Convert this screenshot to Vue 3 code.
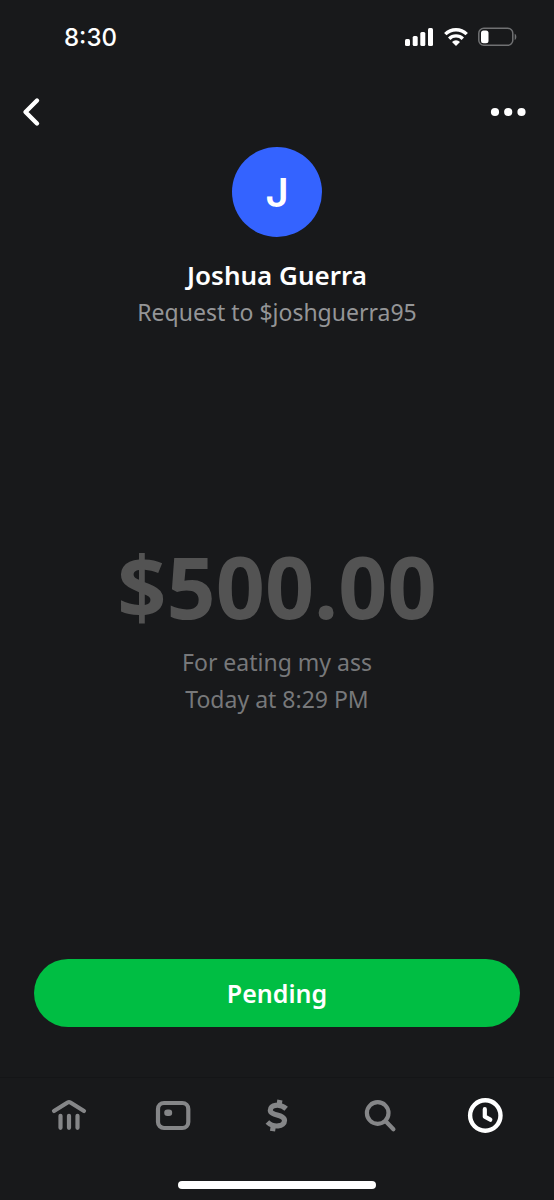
<template>
  <div class="screen">
    <!-- status bar -->
    <div class="status">
      <time class="clock">8:30</time>
      <div class="status-icons">
        <svg width="29" height="20" viewBox="0 0 29 20" fill="#fff">
          <rect x="0" y="12" width="5" height="7" rx="1.5" />
          <rect x="7.7" y="9" width="5" height="10" rx="1.5" />
          <rect x="15.3" y="5" width="5" height="14" rx="1.5" />
          <rect x="23" y="1" width="5" height="18" rx="1.5" />
        </svg>
        <svg width="24" height="20" viewBox="0 0 24 20" fill="none" stroke="#fff" stroke-width="3.4">
          <path d="M1.3 7.1a15.2 15.2 0 0 1 21.4 0" />
          <path d="M5.2 11.7a9.6 9.6 0 0 1 13.6 0" />
          <path d="M12 19 8 15a5.6 5.6 0 0 1 8 0z" fill="#fff" stroke="none" />
        </svg>
        <svg width="39" height="20" viewBox="0 0 39 20">
          <rect x="0.8" y="1.3" width="34" height="17" rx="5" fill="none" stroke="#707173" stroke-width="1.5" />
          <rect x="3" y="3.5" width="7.5" height="12.8" rx="2.5" fill="#fff" />
          <path d="M36.7 6.8c2.2 1 2.2 5.2 0 6.2z" fill="#707173" />
        </svg>
      </div>
    </div>

    <!-- header -->
    <header class="header">
      <button class="icon-btn" type="button" aria-label="Back">
        <svg width="20" height="30" viewBox="0 0 20 30" fill="none" stroke="#fff" stroke-width="4.4" stroke-linecap="round" stroke-linejoin="round">
          <path d="M15 3.5 3.5 15 15 26.5" />
        </svg>
      </button>
      <button class="icon-btn" type="button" aria-label="More">
        <svg width="36" height="10" viewBox="0 0 36 10" fill="#fff">
          <circle cx="5" cy="5" r="4.1" />
          <circle cx="18.2" cy="5" r="4.1" />
          <circle cx="31.5" cy="5" r="4.1" />
        </svg>
      </button>
    </header>

    <main class="main">
      <section class="profile">
        <div class="avatar">J</div>
        <h1 class="name">{{ payment.name }}</h1>
        <p class="cashtag">Request to {{ payment.cashtag }}</p>
      </section>

      <section class="payment">
        <div class="amount">{{ payment.amount }}</div>
        <p class="note">{{ payment.note }}</p>
        <p class="note">{{ payment.date }}</p>
      </section>

      <button class="pending" type="button">Pending</button>
    </main>

    <!-- tab bar -->
    <nav class="tabs">
      <button
        v-for="tab in tabs"
        :key="tab"
        class="tab"
        :class="{ active: tab === current }"
        type="button"
        :aria-label="tab"
        @click="current = tab"
      >
        <svg width="36" height="36" viewBox="0 0 36 36" fill="none" stroke="currentColor" stroke-width="4.2" stroke-linecap="round" stroke-linejoin="round">
          <g v-if="tab === 'Banking'">
            <path d="M3 14 16.6 5.5Q18 4.700 19.4 5.5L33 14" />
            <path d="M9.5 18.8v12M18 18.8v12M26.5 18.8v12" />
          </g>
          <g v-else-if="tab === 'Card'">
            <rect x="3" y="6" width="30.3" height="25" rx="6" />
            <rect x="9.2" y="12.5" width="8" height="6.5" rx="3.2" fill="currentColor" stroke="none" />
          </g>
          <g v-else-if="tab === 'Pay'" stroke-width="5.2" stroke-linecap="butt">
            <path d="M27.2 11.8C20.500 6 11 8 11.300 13.300 11.700 19 25.500 17 25.500 23.500 25.500 30 14.500 31 8.400 25" />
            <path d="m20.900 3-1 6M14.500 28l-1 6.200" />
          </g>
          <g v-else-if="tab === 'Search'">
            <circle cx="14.700" cy="16" r="10.800" />
            <path d="m23.200 24.800 7.200 7.400" />
          </g>
          <g v-else>
            <circle cx="18.3" cy="18.500" r="15.2" stroke-width="4.4" />
            <path d="M17.8 12.200v7.500l5.5 3" />
          </g>
        </svg>
      </button>
    </nav>
    <div class="home-indicator"></div>
  </div>
</template>

<script setup>
import { ref } from "vue";

const payment = {
  name: "Joshua Guerra",
  cashtag: "$joshguerra95",
  amount: "$500.00",
  note: "For eating my ass",
  date: "Today at 8:29 PM",
};

const tabs = ["Banking", "Card", "Pay", "Search", "Activity"];
const current = ref("Activity");
</script>

<style>
body {
  margin: 0;
  background: #18191b;
}
</style>

<style scoped>
* {
  box-sizing: border-box;
  margin: 0;
  padding: 0;
}

.screen {
  display: flex;
  flex-direction: column;
  min-height: 100vh;
  background: #18191b;
  color: #fff;
  font-family: "Noto Sans", sans-serif;
}

button {
  border: none;
  background: none;
  color: inherit;
  font-family: inherit;
  cursor: pointer;
}

svg {
  display: block;
}

/* status bar */
.status {
  display: flex;
  align-items: center;
  justify-content: space-between;
  height: 74px;
  padding: 0 37px 0 64px;
}

.clock {
  font-family: Inter, sans-serif;
  font-size: 24px;
  font-weight: 500;
}

.status-icons {
  display: flex;
  gap: 10px;
}

/* header */
.header {
  display: flex;
  align-items: center;
  justify-content: space-between;
  height: 73px;
  padding: 3px 20px 0 14px;
}

.icon-btn {
  padding: 8px;
}

.main {
  display: flex;
  flex: 1;
  flex-direction: column;
  padding: 0 34px 50px;
}

.profile {
  display: flex;
  flex-direction: column;
  align-items: center;
}

.avatar {
  display: flex;
  align-items: center;
  justify-content: center;
  width: 90px;
  height: 90px;
  border-radius: 50%;
  background: #3463ff;
  font-family: Inter, sans-serif;
  font-size: 40px;
  font-weight: 600;
}

.name {
  margin-top: 20px;
  font-size: 26px;
  font-weight: 600;
  line-height: 36px;
}

.cashtag {
  color: #949597;
  font-size: 23px;
  line-height: 38px;
}

.payment {
  display: flex;
  flex: 1;
  flex-direction: column;
  align-items: center;
  justify-content: center;
  padding-bottom: 36px;
}

.amount {
  margin-bottom: 8px;
  color: #535353;
  font-size: 86px;
  font-weight: 700;
  line-height: 100px;
}

.note {
  color: #77787a;
  font-size: 23px;
  line-height: 37px;
}

.pending {
  height: 68px;
  border-radius: 34px;
  background: #00be43;
  font-size: 25px;
  font-weight: 600;
}

/* tab bar */
.tabs {
  display: flex;
  height: 104px;
  padding: 19px 17px 0;
  border-top: 1px solid #141517;
}

.tab {
  display: flex;
  flex: 1;
  align-items: flex-start;
  justify-content: center;
  color: #858688;
}

.tab.active {
  color: #fff;
}

.home-indicator {
  width: 198px;
  height: 8px;
  margin: 0 auto 11px;
  border-radius: 4px;
  background: #fff;
}
</style>
